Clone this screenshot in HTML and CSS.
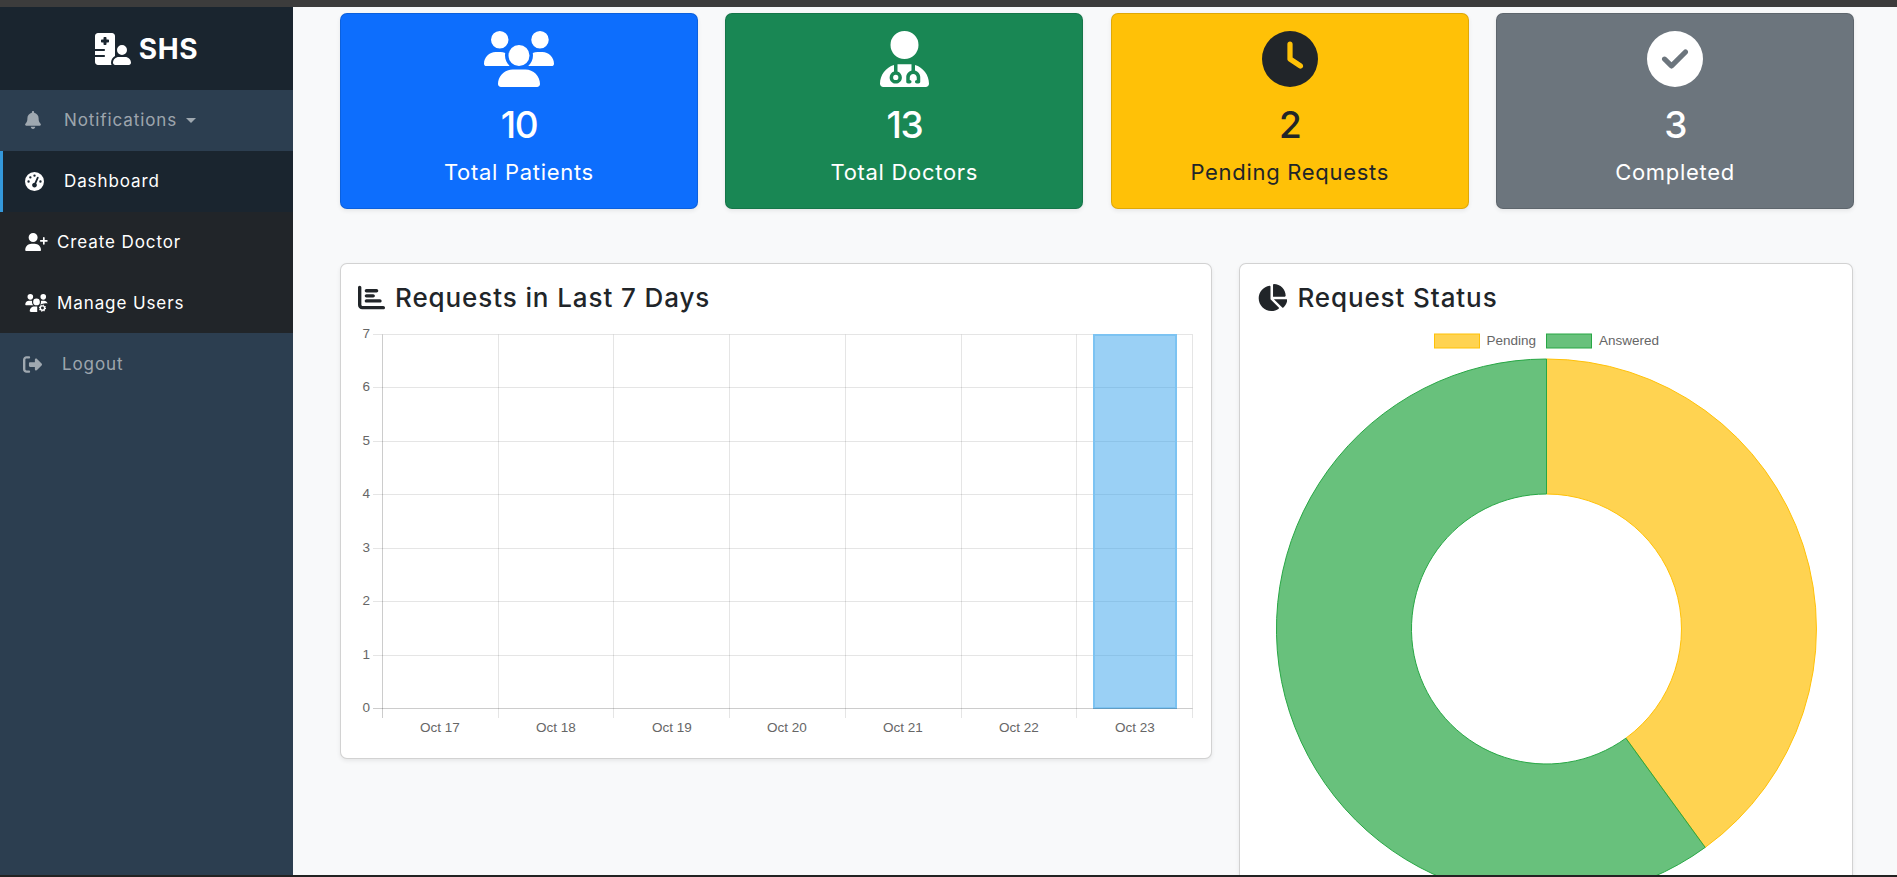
FILE: index.html
```html
<!DOCTYPE html>
<html lang="en">
<head>
  <meta charset="UTF-8" />
  <meta name="viewport" content="width=device-width, initial-scale=1.0"/>
  <title>SHS Dashboard</title>
  <link rel="stylesheet" href="styles.css">
</head>
<body>
  <div class="window-top"></div>
  <div class="app">
    <aside class="sidebar">
      <div class="brand">
        <svg class="brand-icon" viewBox="0 0 576 512"><path d="M48 0C21.5 0 0 21.5 0 48V256H144c8.8 0 16 7.2 16 16s-7.2 16-16 16H0v64H144c8.8 0 16 7.2 16 16s-7.2 16-16 16H0v80c0 26.5 21.5 48 48 48H265.9c-6.3-10.2-9.9-22.2-9.9-35.1c0-46.9 25.8-87.8 64-109.2V271.8 48c0-26.5-21.5-48-48-48H48zM152 64h16c8.8 0 16 7.2 16 16v24h24c8.8 0 16 7.2 16 16v16c0 8.8-7.2 16-16 16H184v24c0 8.8-7.2 16-16 16H152c-8.8 0-16-7.2-16-16V152H112c-8.8 0-16-7.2-16-16V120c0-8.8 7.2-16 16-16h24V80c0-8.8 7.2-16 16-16zM512 272a80 80 0 1 0 -160 0 80 80 0 1 0 160 0zM288 477.1c0 19.3 15.6 34.9 34.9 34.9H541.1c19.3 0 34.9-15.6 34.9-34.9c0-51.4-41.7-93.1-93.1-93.1H381.1c-51.4 0-93.1 41.7-93.1 93.1z"/></svg>
        <span>SHS</span>
      </div>
      <nav>
        <a class="nav-row muted">
          <span class="nav-icon"><svg class="icon-bell" viewBox="0 0 448 512"><path d="M224 0c-17.7 0-32 14.3-32 32V51.2C119 66 64 130.6 64 208v18.8c0 47-17.3 92.4-48.5 127.6l-7.4 8.3c-8.4 9.4-10.4 22.9-5.3 34.4S19.4 416 32 416H416c12.6 0 24-7.4 29.2-18.9s3.1-25-5.3-34.4l-7.4-8.3C401.3 319.2 384 273.9 384 226.8V208c0-77.4-55-142-128-156.8V32c0-17.7-14.3-32-32-32zm45.3 493.3c12-12 18.7-28.3 18.7-45.3H224 160c0 17 6.7 33.3 18.7 45.3s28.3 18.7 45.3 18.7s33.3-6.7 45.3-18.7z"/></svg></span>
          Notifications<i class="caret"></i>
        </a>
        <a class="nav-row active">
          <span class="nav-icon"><svg class="icon-gauge" viewBox="0 0 512 512"><path d="M0 256a256 256 0 1 1 512 0A256 256 0 1 1 0 256zM288 96a32 32 0 1 0 -64 0 32 32 0 1 0 64 0zM256 416c35.3 0 64-28.7 64-64c0-17.4-6.9-33.1-18.1-44.6L366 161.7c5.3-12.1-.2-26.3-12.3-31.6s-26.3 .2-31.6 12.3L257.9 288c-.6 0-1.3 0-1.9 0c-35.3 0-64 28.7-64 64s28.7 64 64 64zM176 144a32 32 0 1 0 -64 0 32 32 0 1 0 64 0zM96 288a32 32 0 1 0 0-64 32 32 0 1 0 0 64zm352-32a32 32 0 1 0 -64 0 32 32 0 1 0 64 0z"/></svg></span>
          Dashboard
        </a>
        <div class="nav-group">
          <a class="nav-row small-gap">
            <span class="nav-icon"><svg class="icon-wide" viewBox="0 0 640 512"><path d="M96 128a128 128 0 1 1 256 0A128 128 0 1 1 96 128zM0 482.3C0 383.8 79.8 304 178.3 304h91.4C368.2 304 448 383.8 448 482.3c0 16.4-13.3 29.7-29.7 29.7H29.7C13.3 512 0 498.7 0 482.3zM504 312V248H440c-13.3 0-24-10.7-24-24s10.7-24 24-24h64V136c0-13.3 10.7-24 24-24s24 10.7 24 24v64h64c13.3 0 24 10.7 24 24s-10.7 24-24 24H552v64c0 13.3-10.7 24-24 24s-24-10.7-24-24z"/></svg></span>
            Create Doctor
          </a>
          <a class="nav-row small-gap">
            <span class="nav-icon"><svg class="icon-wide" viewBox="0 0 640 512"><path d="M144 0a80 80 0 1 1 0 160A80 80 0 1 1 144 0zM512 0a80 80 0 1 1 0 160A80 80 0 1 1 512 0zM0 298.7C0 239.8 47.8 192 106.7 192h42.7c15.9 0 31 3.5 44.6 9.7c-1.3 7.2-1.9 14.7-1.9 22.3c0 38.2 16.8 72.5 43.3 96c-.2 0-.4 0-.7 0H21.3C9.6 320 0 310.4 0 298.7zM224 224a96 96 0 1 1 192 0 96 96 0 1 1 -192 0zM128 485.3C128 411.7 187.7 352 261.3 352H340v160H154.7c-14.7 0-26.7-11.9-26.7-26.7z"/><path d="M405 320c26-23 43-58 43-96c0-7.6-.7-15-1.9-22.3c13.6-6.3 28.7-9.7 44.6-9.7h42.7c48 0 88 31 101 75c-40-10-90-10-140 10c-30 12-60 30-90 43z"/><circle class="gear-cut" cx="490" cy="400" r="112"/><circle class="gear-teeth" cx="490" cy="400" r="84"/><circle class="gear-ring" cx="490" cy="400" r="62"/></svg></span>
            Manage Users
          </a>
        </div>
        <a class="nav-row muted logout">
          <span class="nav-icon"><svg class="icon-logout" viewBox="0 0 512 512"><path d="M377.9 105.9L500.7 228.7c7.2 7.2 11.3 17.1 11.3 27.3s-4.1 20.1-11.3 27.3L377.9 406.1c-6.4 6.4-15 9.9-24 9.9c-18.7 0-33.9-15.2-33.9-33.9l0-62.1-128 0c-17.7 0-32-14.3-32-32l0-64c0-17.7 14.3-32 32-32l128 0 0-62.1c0-18.7 15.2-33.9 33.9-33.9c9 0 17.6 3.6 24 9.9zM160 96L96 96c-17.7 0-32 14.3-32 32l0 256c0 17.7 14.3 32 32 32l64 0c17.7 0 32 14.3 32 32s-14.3 32-32 32l-64 0c-53 0-96-43-96-96L0 128C0 75 43 32 96 32l64 0c17.7 0 32 14.3 32 32s-14.3 32-32 32z"/></svg></span>
          Logout
        </a>
      </nav>
    </aside>

    <main class="content">
      <section class="stats">
        <div class="stat-card bg-blue">
          <svg class="stat-icon" viewBox="0 0 640 512"><path d="M144 0a80 80 0 1 1 0 160A80 80 0 1 1 144 0zM512 0a80 80 0 1 1 0 160A80 80 0 1 1 512 0zM0 298.7C0 239.8 47.8 192 106.7 192h42.7c15.9 0 31 3.5 44.6 9.7c-1.3 7.2-1.9 14.7-1.9 22.3c0 38.2 16.8 72.5 43.3 96c-.2 0-.4 0-.7 0H21.3C9.6 320 0 310.4 0 298.7zM405.3 320c-.2 0-.4 0-.7 0c26.6-23.5 43.3-57.8 43.3-96c0-7.6-.7-15-1.9-22.3c13.6-6.3 28.7-9.7 44.6-9.7h42.7C592.2 192 640 239.8 640 298.7c0 11.8-9.6 21.3-21.3 21.3H405.3zM224 224a96 96 0 1 1 192 0 96 96 0 1 1 -192 0zM128 485.3C128 411.7 187.7 352 261.3 352H378.7C452.3 352 512 411.7 512 485.3c0 14.7-11.9 26.7-26.7 26.7H154.7c-14.7 0-26.7-11.9-26.7-26.7z"/></svg>
          <div class="stat-num">10</div>
          <div class="stat-label">Total Patients</div>
        </div>
        <div class="stat-card bg-green">
          <svg class="stat-icon" viewBox="0 0 448 512"><path d="M224 256A128 128 0 1 0 224 0a128 128 0 1 0 0 256zm-96 55.2C54 332.9 0 401.3 0 482.3C0 498.7 13.3 512 29.7 512H418.3c16.4 0 29.7-13.3 29.7-29.7c0-81-54-149.4-128-171.1V362c27.6 7.1 48 32.2 48 62v40c0 8.8-7.2 16-16 16H336c-8.8 0-16-7.2-16-16s7.2-16 16-16V424c0-17.7-14.3-32-32-32s-32 14.3-32 32v24c8.8 0 16 7.2 16 16s-7.2 16-16 16H256c-8.8 0-16-7.2-16-16V424c0-29.8 20.4-54.9 48-62V304.9c-6-.6-12.1-.9-18.3-.9H178.3c-6.2 0-12.3 .3-18.3 .9v65.4c23.1 6.9 40 28.3 40 53.7c0 30.9-25.1 56-56 56s-56-25.1-56-56c0-25.4 16.9-46.8 40-53.7V311.2zM144 448a24 24 0 1 0 0-48 24 24 0 1 0 0 48z"/></svg>
          <div class="stat-num">13</div>
          <div class="stat-label">Total Doctors</div>
        </div>
        <div class="stat-card bg-yellow">
          <svg class="stat-icon" viewBox="0 0 512 512"><path d="M256 0a256 256 0 1 1 0 512A256 256 0 1 1 256 0zM232 120V256c0 8 4 15.5 10.7 20l96 64c11 7.4 25.9 4.4 33.3-6.7s4.4-25.9-6.7-33.3L280 243.2V120c0-13.3-10.7-24-24-24s-24 10.7-24 24z"/></svg>
          <div class="stat-num">2</div>
          <div class="stat-label">Pending Requests</div>
        </div>
        <div class="stat-card bg-gray">
          <svg class="stat-icon" viewBox="0 0 512 512"><path d="M256 512A256 256 0 1 0 256 0a256 256 0 1 0 0 512zM369 209L241 337c-9.4 9.4-24.6 9.4-33.9 0l-64-64c-9.4-9.4-9.4-24.6 0-33.9s24.6-9.4 33.9 0l47 47L335 175c9.4-9.4 24.6-9.4 33.9 0s9.4 24.6 0 33.9z"/></svg>
          <div class="stat-num">3</div>
          <div class="stat-label">Completed</div>
        </div>
      </section>

      <section class="charts">
        <div class="chart-card">
          <h2 class="chart-title">
            <svg class="title-icon" viewBox="0 0 512 512"><path d="M32 32c17.7 0 32 14.3 32 32V400c0 8.8 7.2 16 16 16H480c17.7 0 32 14.3 32 32s-14.3 32-32 32H80c-44.2 0-80-35.8-80-80V64C0 46.3 14.3 32 32 32zm96 96c0-17.7 14.3-32 32-32l192 0c17.7 0 32 14.3 32 32s-14.3 32-32 32l-192 0c-17.7 0-32-14.3-32-32zm32 64H288c17.7 0 32 14.3 32 32s-14.3 32-32 32H160c-17.7 0-32-14.3-32-32s14.3-32 32-32zm0 96H416c17.7 0 32 14.3 32 32s-14.3 32-32 32H160c-17.7 0-32-14.3-32-32s14.3-32 32-32z"/></svg>
            Requests in Last 7 Days
          </h2>
          <svg class="bar-chart" viewBox="0 0 835 416">
            <g class="grid">
              <line x1="15" x2="834.5" y1="10.5" y2="10.5"/>
              <line x1="15" x2="834.5" y1="63.5" y2="63.5"/>
              <line x1="15" x2="834.5" y1="117.5" y2="117.5"/>
              <line x1="15" x2="834.5" y1="170.5" y2="170.5"/>
              <line x1="15" x2="834.5" y1="224.5" y2="224.5"/>
              <line x1="15" x2="834.5" y1="277.5" y2="277.5"/>
              <line x1="15" x2="834.5" y1="331.5" y2="331.5"/>
              <line x1="140.5" x2="140.5" y1="10.5" y2="394"/>
              <line x1="255.5" x2="255.5" y1="10.5" y2="394"/>
              <line x1="371.5" x2="371.5" y1="10.5" y2="394"/>
              <line x1="487.5" x2="487.5" y1="10.5" y2="394"/>
              <line x1="603.5" x2="603.5" y1="10.5" y2="394"/>
              <line x1="718.5" x2="718.5" y1="10.5" y2="394"/>
              <line x1="834.5" x2="834.5" y1="10.5" y2="394"/>
            </g>
            <rect class="bar" x="736" y="11" width="82" height="373"/>
            <g class="axis">
              <line x1="24.5" x2="24.5" y1="10.5" y2="394"/>
              <line x1="15" x2="834.5" y1="384.5" y2="384.5"/>
            </g>
            <g class="y-labels">
              <text x="12" y="14">7</text>
              <text x="12" y="67">6</text>
              <text x="12" y="121">5</text>
              <text x="12" y="174">4</text>
              <text x="12" y="228">3</text>
              <text x="12" y="281">2</text>
              <text x="12" y="335">1</text>
              <text x="12" y="388">0</text>
            </g>
            <g class="x-labels">
              <text x="82" y="408">Oct 17</text>
              <text x="198" y="408">Oct 18</text>
              <text x="314" y="408">Oct 19</text>
              <text x="429" y="408">Oct 20</text>
              <text x="545" y="408">Oct 21</text>
              <text x="661" y="408">Oct 22</text>
              <text x="777" y="408">Oct 23</text>
            </g>
          </svg>
        </div>

        <div class="chart-card status-card">
          <h2 class="chart-title">
            <svg class="title-icon" viewBox="0 0 576 512"><path d="M304 240V16.6c0-9 7-16.6 16-16.6C443.7 0 544 100.3 544 224c0 9-7.6 16-16.6 16H304zM32 272C32 150.7 122.1 50.3 239 34.3c9.2-1.3 17 6.1 17 15.4V288L412.5 444.5c6.7 6.7 6.2 17.7-1.5 23.1C371.8 495.6 323.8 512 272 512C139.5 512 32 404.6 32 272zm526.4 16c9.3 0 16.6 7.8 15.4 17c-7.7 55.9-34.6 105.6-73.9 142.3c-6 5.6-15.4 5.2-21.2-.7L320 288H558.4z"/></svg>
            Request Status
          </h2>
          <svg class="donut-chart" viewBox="0 0 578 600">
            <rect class="slice-pending" x="177.5" y="10" width="45" height="14"/>
            <text class="legend-text" x="229.5" y="21">Pending</text>
            <rect class="slice-answered" x="289.5" y="10" width="45" height="14"/>
            <text class="legend-text" x="342" y="21">Answered</text>
            <path class="slice-pending" d="M289.5 35A270 270 0 0 1 448.2 523.4L368.85 414.2A135 135 0 0 0 289.5 170Z"/>
            <path class="slice-answered" d="M448.2 523.4A270 270 0 1 1 289.5 35L289.5 170A135 135 0 1 0 368.85 414.2Z"/>
          </svg>
        </div>
      </section>
    </main>
  </div>
  <div class="window-bottom"></div>
</body>
</html>
```

FILE: styles.css
```css
* {
  box-sizing: border-box;
}
html, body {
  height: 100%;
}
body {
  margin: 0;
  display: flex;
  flex-direction: column;
  overflow: hidden;
  font-family: Inter, "Liberation Sans", sans-serif;
  color: #212529;
  background: #f8f9fa;
}
.window-top {
  height: 7px;
  background: #3c3c3c;
}
.window-bottom {
  height: 2px;
  background: #222;
}
.app {
  flex: 1;
  display: flex;
  min-height: 0;
}

/* sidebar */
.sidebar {
  width: 293px;
  flex-shrink: 0;
  background: #2c3e50;
  color: #fff;
}
.brand {
  height: 83px;
  display: flex;
  align-items: center;
  justify-content: center;
  gap: 8px;
  background: #1a252f;
  font-size: 28px;
  font-weight: 700;
  letter-spacing: .7px;
}
.brand-icon {
  width: 36px;
  height: 32px;
  fill: #fff;
}
.nav-row {
  min-height: 60.75px;
  display: flex;
  align-items: center;
  padding-left: 25px;
  font-size: 17px;
  letter-spacing: .9px;
  color: #fff;
}
.nav-row svg {
  display: block;
  fill: currentColor;
}
.nav-icon {
  width: 39px;
  flex-shrink: 0;
}
.nav-row.muted {
  color: rgba(255, 255, 255, .55);
}
.nav-row.active {
  background: #1a252f;
  padding-left: 22px;
  border-left: 3px solid #3498db;
}
.nav-group {
  background: #212529;
}
.small-gap .nav-icon {
  width: 32px;
}
.logout {
  padding-left: 23px;
  padding-top: 2px;
}
.icon-bell {
  width: 16px;
  height: 18px;
}
.icon-gauge {
  width: 19px;
  height: 19px;
}
.icon-wide {
  width: 23px;
  height: 18px;
}
.icon-logout {
  width: 19px;
  height: 19px;
}
.gear-cut {
  fill: #212529;
}
.gear-teeth {
  fill: none;
  stroke: #fff;
  stroke-width: 36;
  stroke-dasharray: 30 36;
}
.gear-ring {
  fill: #212529;
  stroke: #fff;
  stroke-width: 40;
}
.caret {
  margin-left: 9px;
  border-top: 5px solid currentColor;
  border-left: 5px solid transparent;
  border-right: 5px solid transparent;
}

/* main area */
.content {
  flex: 1;
  min-width: 0;
  padding: 6px 43px 0 47px;
  overflow: hidden;
}
.stats {
  display: grid;
  grid-template-columns: repeat(4, 1fr);
  gap: 27.5px;
  margin-bottom: 54px;
}
.stat-card {
  height: 196px;
  padding-top: 17px;
  display: flex;
  flex-direction: column;
  align-items: center;
  border: 1px solid rgba(0, 0, 0, .125);
  border-radius: 7px;
  box-shadow: 0 2px 4px rgba(0, 0, 0, .075);
  color: #fff;
}
.stat-icon {
  height: 56px;
  display: block;
  fill: currentColor;
}
.stat-num {
  margin-top: 14px;
  font-size: 37px;
  font-weight: 500;
  line-height: 48px;
  letter-spacing: -1.5px;
}
.stat-label {
  margin-top: 8px;
  font-size: 22px;
  line-height: 30px;
  letter-spacing: .7px;
}
.bg-blue {
  background: #0d6efd;
}
.bg-green {
  background: #198754;
}
.bg-yellow {
  background: #ffc107;
  color: #212529;
}
.bg-gray {
  background: #6c757d;
}

/* chart cards */
.charts {
  display: grid;
  grid-template-columns: 872px 614px;
  gap: 27px;
  align-items: start;
}
.chart-card {
  padding: 17px 17px 18px;
  background: #fff;
  border: 1px solid rgba(0, 0, 0, .175);
  border-radius: 7px;
  box-shadow: 0 2px 4px rgba(0, 0, 0, .075);
}
.chart-title {
  display: flex;
  align-items: center;
  gap: 10px;
  height: 33px;
  margin: 0 0 10px;
  font-size: 26px;
  font-weight: 500;
  letter-spacing: .9px;
}
.title-icon {
  height: 27px;
  flex-shrink: 0;
  fill: currentColor;
}
.bar-chart {
  width: 835px;
  height: 416px;
  display: block;
}
.donut-chart {
  width: 578px;
  height: 600px;
  display: block;
}
.grid line {
  stroke: rgba(0, 0, 0, .1);
}
.axis line {
  stroke: rgba(0, 0, 0, .2);
}
.bar {
  fill: rgba(54, 162, 235, .5);
  stroke: #7cc3f2;
  stroke-width: 2;
}
.bar-chart text, .legend-text {
  font-family: "Liberation Sans", Arial, sans-serif;
  font-size: 13.5px;
  fill: #666;
}
.y-labels text {
  text-anchor: end;
}
.x-labels text {
  text-anchor: middle;
}
.slice-pending {
  fill: rgba(255, 193, 7, .7);
  stroke: #ffc107;
}
.slice-answered {
  fill: rgba(40, 167, 69, .7);
  stroke: #28a745;
}
```
